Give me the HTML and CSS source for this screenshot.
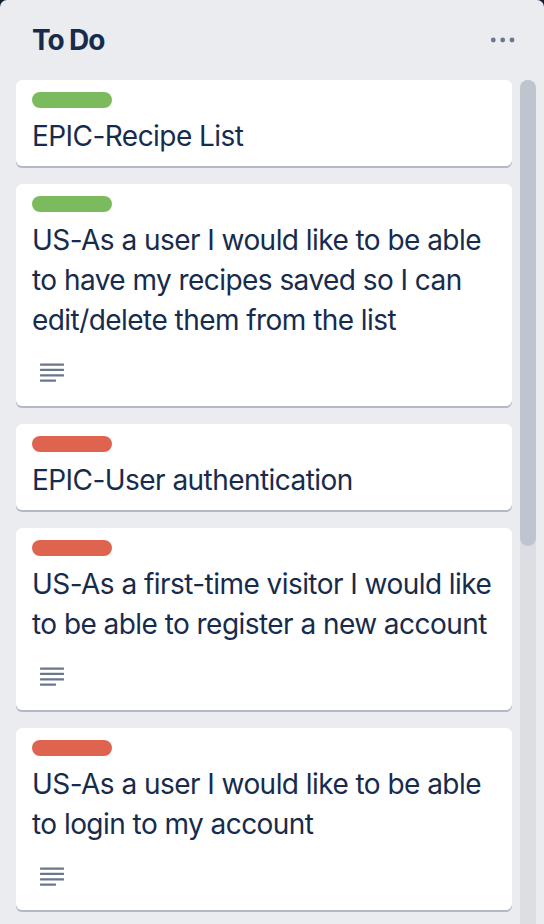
FILE: index.html
```html
<!DOCTYPE html>
<html lang="en">
<head>
<meta charset="utf-8">
<title>To Do</title>
<link rel="stylesheet" href="styles.css">
</head>
<body>
<section class="list">
  <header class="list-header">
    <h2 class="list-title">To Do</h2>
    <button class="list-menu" aria-label="List actions">
      <svg width="26" height="10" viewBox="0 0 26 10"><circle cx="3.3" cy="5" r="2.4"/><circle cx="12.7" cy="5" r="2.4"/><circle cx="22" cy="5" r="2.4"/></svg>
    </button>
  </header>
  <div class="list-body">
    <div class="cards">
      <article class="card">
        <span class="label label-green"></span>
        <p class="card-title">EPIC-Recipe List</p>
      </article>
      <article class="card">
        <span class="label label-green"></span>
        <p class="card-title">US-As a user I would like to be able to have my recipes saved so I can edit/delete them from the list</p>
        <div class="badges">
          <svg class="desc-icon" width="24" height="24" viewBox="0 0 24 24"><rect x="0" y="3.4" width="24" height="2.3" rx="0.5"/><rect x="0" y="8.8" width="24" height="2.3" rx="0.5"/><rect x="0" y="14.2" width="24" height="2.3" rx="0.5"/><rect x="0" y="19.4" width="16" height="2.3" rx="0.5"/></svg>
        </div>
      </article>
      <article class="card">
        <span class="label label-red"></span>
        <p class="card-title">EPIC-User authentication</p>
      </article>
      <article class="card">
        <span class="label label-red"></span>
        <p class="card-title">US-As a first-time visitor I would like to be able to register a new account</p>
        <div class="badges">
          <svg class="desc-icon" width="24" height="24" viewBox="0 0 24 24"><rect x="0" y="3.4" width="24" height="2.3" rx="0.5"/><rect x="0" y="8.8" width="24" height="2.3" rx="0.5"/><rect x="0" y="14.2" width="24" height="2.3" rx="0.5"/><rect x="0" y="19.4" width="16" height="2.3" rx="0.5"/></svg>
        </div>
      </article>
      <article class="card">
        <span class="label label-red"></span>
        <p class="card-title">US-As a user I would like to be able to login to my account</p>
        <div class="badges">
          <svg class="desc-icon" width="24" height="24" viewBox="0 0 24 24"><rect x="0" y="3.4" width="24" height="2.3" rx="0.5"/><rect x="0" y="8.8" width="24" height="2.3" rx="0.5"/><rect x="0" y="14.2" width="24" height="2.3" rx="0.5"/><rect x="0" y="19.4" width="16" height="2.3" rx="0.5"/></svg>
        </div>
      </article>
    </div>
    <div class="scrollbar"><div class="scrollbar-thumb"></div></div>
  </div>
</section>
</body>
</html>
```
FILE: styles.css
```css
* { box-sizing: border-box; }
html, body { margin: 0; padding: 0; }
body {
  background: #0f1d33;
  font-family: Inter, "Noto Sans", sans-serif;
  color: #172b4d;
  width: 544px;
  height: 924px;
  overflow: hidden;
}
.list {
  background: #ebecf0;
  border-radius: 7px 7px 0 0;
  height: 924px;
  display: flex;
  flex-direction: column;
}
.list-header {
  display: flex;
  align-items: center;
  justify-content: space-between;
  padding: 20px 28px 20px 32px;
  height: 80px;
}
.list-title {
  margin: 0;
  font-size: 28px;
  line-height: 40px;
  font-weight: 700;
  letter-spacing: -1.1px;
  color: #172b4d;
}
.list-menu {
  border: 0;
  background: none;
  padding: 0;
  display: flex;
  align-items: center;
  height: 40px;
  fill: #6b778c;
}
.list-body {
  display: flex;
  align-items: flex-start;
  flex: 1;
  min-height: 0;
}
.cards {
  margin-left: 16px;
  width: 496px;
  display: flex;
  flex-direction: column;
  gap: 18px;
}
.card {
  background: #fff;
  border-radius: 6px;
  box-shadow: 0 2px 0 rgba(9, 30, 66, 0.25);
  padding: 12px 16px 10px;
}
.label {
  display: block;
  width: 80px;
  height: 16px;
  border-radius: 8px;
  margin-bottom: 8px;
}
.label-green { background: #7bbb5e; }
.label-red { background: #de6450; }
.card-title {
  margin: 0;
  font-size: 28px;
  line-height: 40px;
  letter-spacing: -0.55px;
  color: #172b4d;
}
.badges {
  display: flex;
  align-items: center;
  height: 40px;
  margin: 12px 0 4px;
  padding-left: 8px;
}
.desc-icon { fill: #6b778c; display: block; }
.scrollbar {
  margin-left: 8px;
  width: 16px;
  align-self: stretch;
  background: #dcdee3;
  border-radius: 8px 8px 0 0;
}
.scrollbar-thumb {
  height: 466px;
  background: #bfc4ce;
  border-radius: 8px;
}
```
